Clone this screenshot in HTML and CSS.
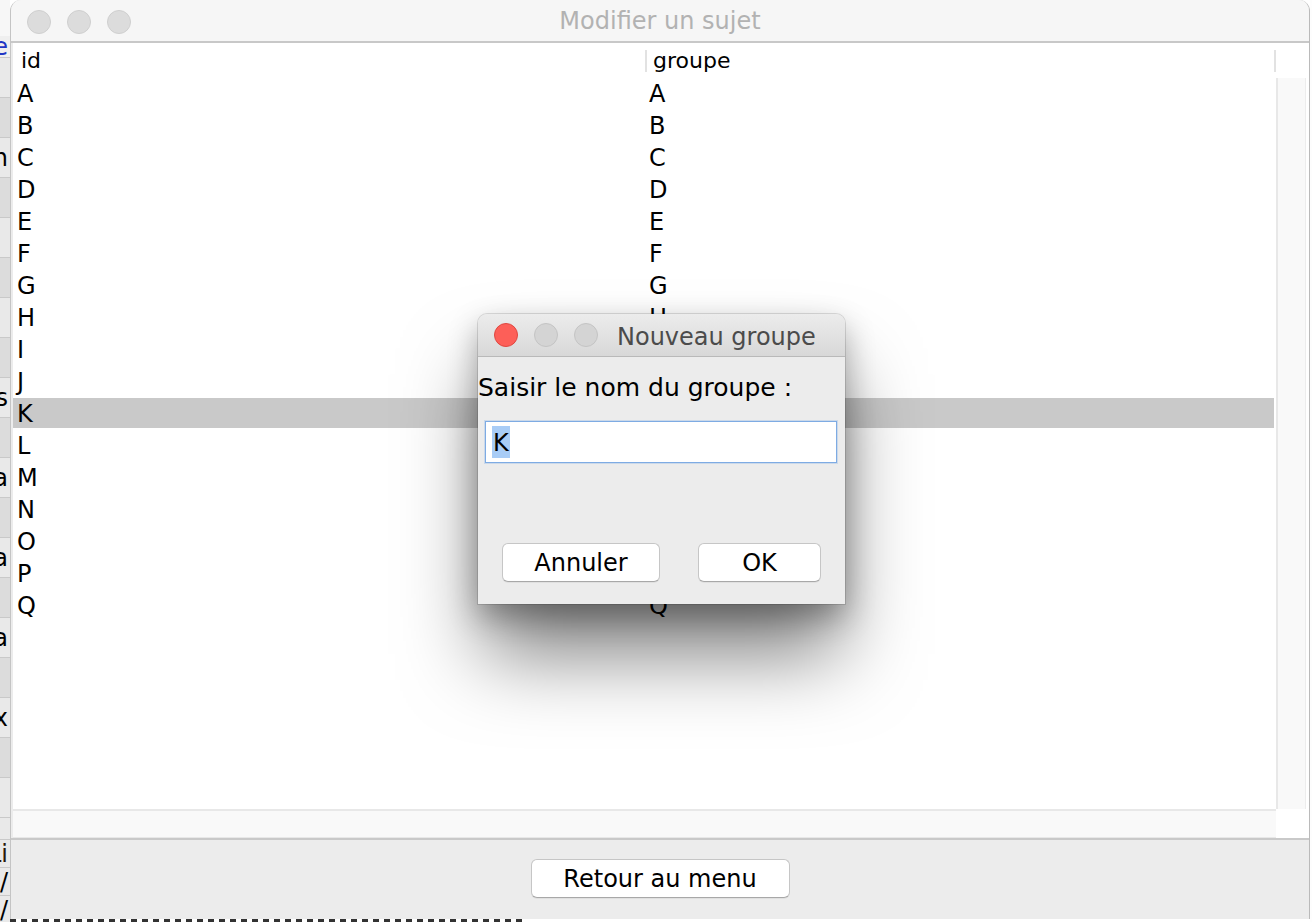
FILE: index.html
```html
<!DOCTYPE html>
<html lang="fr">
<head>
<meta charset="utf-8">
<title>Modifier un sujet</title>
<link rel="stylesheet" href="styles.css">
</head>
<body>
<div class="screen">
  <div class="behind-left">
    <div class="bl-top"></div>
    <div class="bl-row short blue"><span>e</span></div>
    <div class="bl-row"></div>
    <div class="bl-row dark"></div>
    <div class="bl-row"><span>n</span></div>
    <div class="bl-row dark"></div>
    <div class="bl-row"></div>
    <div class="bl-row dark"></div>
    <div class="bl-row"></div>
    <div class="bl-row dark"></div>
    <div class="bl-row"><span>s</span></div>
    <div class="bl-row dark"></div>
    <div class="bl-row"><span>a</span></div>
    <div class="bl-row dark"></div>
    <div class="bl-row"><span>a</span></div>
    <div class="bl-row dark"></div>
    <div class="bl-row"><span>a</span></div>
    <div class="bl-row dark"></div>
    <div class="bl-row"><span>x</span></div>
    <div class="bl-row dark"></div>
    <div class="bl-row"></div>
    <div class="bl-row short"></div>
    <div class="bl-row mid brown"><span>Li</span></div>
    <div class="bl-row mid"><span>/</span></div>
    <div class="bl-row mid"><span>/</span></div>
  </div>

  <div class="wincol">
    <div class="window">
      <div class="titlebar">
        <div class="lights">
          <span class="light"></span>
          <span class="light"></span>
          <span class="light"></span>
        </div>
        <div class="title">Modifier un sujet</div>
        <div></div>
      </div>

      <div class="pane">
        <div class="thead">
          <div class="th c1">id</div>
          <div class="sep"></div>
          <div class="th c2">groupe</div>
          <div class="sep"></div>
        </div>
        <div class="thead-corner"></div>
        <div class="tbody">
          <div class="row"><div class="c1">A</div><div class="c2">A</div></div>
          <div class="row"><div class="c1">B</div><div class="c2">B</div></div>
          <div class="row"><div class="c1">C</div><div class="c2">C</div></div>
          <div class="row"><div class="c1">D</div><div class="c2">D</div></div>
          <div class="row"><div class="c1">E</div><div class="c2">E</div></div>
          <div class="row"><div class="c1">F</div><div class="c2">F</div></div>
          <div class="row"><div class="c1">G</div><div class="c2">G</div></div>
          <div class="row"><div class="c1">H</div><div class="c2">H</div></div>
          <div class="row"><div class="c1">I</div><div class="c2">I</div></div>
          <div class="row"><div class="c1">J</div><div class="c2">J</div></div>
          <div class="row sel"><div class="c1">K</div><div class="c2">K</div></div>
          <div class="row"><div class="c1">L</div><div class="c2">L</div></div>
          <div class="row"><div class="c1">M</div><div class="c2">M</div></div>
          <div class="row"><div class="c1">N</div><div class="c2">N</div></div>
          <div class="row"><div class="c1">O</div><div class="c2">O</div></div>
          <div class="row"><div class="c1">P</div><div class="c2">P</div></div>
          <div class="row"><div class="c1">Q</div><div class="c2">Q</div></div>
        </div>
        <div class="vtrack"></div>
        <div class="htrack"></div>
        <div class="corner"></div>
      </div>

      <div class="bottombar">
        <button class="btn btn-back">Retour au menu</button>
      </div>
    </div>
    <div class="under"></div>
  </div>

  <div class="behind-right"></div>

  <div class="dialog">
    <div class="dtitlebar">
      <div class="lights">
        <span class="light red"></span>
        <span class="light dim"></span>
        <span class="light dim"></span>
      </div>
      <div class="dtitle">Nouveau groupe</div>
    </div>
    <div class="dbody">
      <div class="dlabel">Saisir le nom du groupe :</div>
      <div class="field"><span class="selected">K</span></div>
      <div class="dbuttons">
        <button class="btn btn-cancel">Annuler</button>
        <button class="btn btn-ok">OK</button>
      </div>
    </div>
  </div>
</div>
</body>
</html>
```

FILE: styles.css
```css
* { box-sizing: border-box; }

body {
  margin: 0;
  background: #ffffff;
  font-family: "DejaVu Sans", "Liberation Sans", sans-serif;
  color: #000;
}

.screen {
  position: relative;
  display: flex;
  width: 1312px;
  height: 922px;
  overflow: hidden;
}

/* background window peeking out on the left */
.behind-left {
  width: 10px;
  flex: none;
  display: flex;
  flex-direction: column;
  background: #e6e6e6;
  overflow: hidden;
}
.bl-top { height: 36px; flex: none; background: #f7f7f7; }
.bl-row {
  height: 40px;
  flex: none;
  display: flex;
  justify-content: flex-end;
  align-items: center;
  padding-right: 2px;
  font-size: 24px;
  white-space: nowrap;
  overflow: hidden;
  background: #e9e9e9;
  border-bottom: 1px solid #c9c9c9;
}
.bl-row.dark { background: #dcdcdc; }
.bl-row.short { height: 22px; }
.bl-row.mid { height: 28px; }
.bl-row.blue { color: #1f35c4; background: #efefef; }
.bl-row.brown { color: #2a1a08; }

.wincol {
  width: 1300px;
  flex: none;
  display: flex;
  flex-direction: column;
  background: #ffffff;
}

.window {
  height: 919px;
  flex: none;
  display: flex;
  flex-direction: column;
  background: #ececec;
  border-left: 1px solid #c4c4c4;
  border-right: 1px solid #bababa;
  border-radius: 11px 11px 0 0;
  overflow: hidden;
}

.under {
  height: 3px;
  width: 512px;
  background: repeating-linear-gradient(90deg, #333 0 6px, #fff 6px 11px);
}

.behind-right {
  width: 2px;
  flex: none;
  background: #fdfdfd;
}

/* title bar */
.titlebar {
  height: 43px;
  flex: none;
  display: grid;
  grid-template-columns: 1fr auto 1fr;
  align-items: center;
  background: #f6f6f6;
  border-bottom: 2px solid #c8c8c8;
}
.lights {
  display: flex;
  gap: 16px;
  padding-left: 16px;
}
.light {
  width: 24px;
  height: 24px;
  border-radius: 50%;
  background: #dcdcdc;
  border: 1px solid #cfcfcf;
}
.title {
  font-size: 24px;
  color: #b2b2b2;
  line-height: 43px;
}

/* scroll pane with table */
.pane {
  height: 795px;
  flex: none;
  margin-left: 2px;
  display: grid;
  grid-template-columns: 1263px 1fr;
  grid-template-rows: 35px 1fr 29px;
  background: #ffffff;
}
.thead {
  display: flex;
  align-items: stretch;
  font-size: 22px;
  line-height: 35px;
}
.th.c1 { width: 632px; padding-left: 8px; }
.th.c2 { width: 627px; padding-left: 6px; }
.sep {
  width: 2px;
  margin: 7px 0 6px;
  background: #e2e2e2;
}
.thead-corner { background: #fff; }

.tbody { overflow: hidden; }
.row {
  display: flex;
  height: 30px;
  margin-bottom: 2px;
  font-size: 24px;
  line-height: 33px;
}
.row.sel { background: #c9c9c9; margin-right: 2px; }
.row .c1 { width: 632px; padding-left: 4px; }
.row .c2 { padding-left: 4px; }

.vtrack {
  background: #f9f9f9;
  border-left: 2px solid #e8e8e8;
  border-right: 1px solid #ededed;
  margin-right: 3px;
}
.htrack {
  background: #f9f9f9;
  border-top: 2px solid #e8e8e8;
  border-bottom: 1px solid #e8e8e8;
}
.corner { background: #fff; }

/* bottom bar */
.bottombar {
  flex: 1;
  display: flex;
  justify-content: center;
  align-items: flex-start;
  padding-top: 19px;
  border-top: 2px solid #c9c9c9;
}

.btn {
  height: 39px;
  padding: 0;
  background: #ffffff;
  border: 1px solid #c6c6c6;
  border-bottom-color: #a8a8a8;
  border-radius: 6px;
  font-family: "DejaVu Sans", "Liberation Sans", sans-serif;
  font-size: 24px;
  color: #000;
  line-height: 38px;
  box-shadow: 0 1px 0 rgba(0,0,0,0.05);
}
.btn-back { width: 259px; }
.btn-cancel { width: 158px; }
.btn-ok { width: 123px; }

/* modal dialog (overlay) */
.dialog {
  position: absolute;
  left: 478px;
  top: 314px;
  width: 367px;
  height: 290px;
  background: #ececec;
  border-radius: 9px 9px 0 0;
  box-shadow:
    0 0 0 1px rgba(0,0,0,0.12),
    0 12px 30px rgba(0,0,0,0.30),
    0 55px 80px -5px rgba(0,0,0,0.50);
  display: flex;
  flex-direction: column;
}
.dtitlebar {
  height: 43px;
  flex: none;
  display: flex;
  align-items: center;
  background: linear-gradient(#ececec, #d8d8d8);
  border-bottom: 1px solid #b9b9b9;
  border-radius: 9px 9px 0 0;
}
.light.red { background: #fd5f58; border-color: #df4740; }
.light.dim { background: #d4d4d4; border-color: #c4c4c4; }
.dtitle {
  margin-left: 19px;
  padding-top: 4px;
  font-size: 24px;
  color: #4b4b4b;
  line-height: 38px;
}
.dbody {
  display: flex;
  flex-direction: column;
}
.dlabel {
  margin-top: 14px;
  height: 32px;
  font-size: 25px;
  line-height: 34px;
}
.field {
  margin: 18px 8px 0 7px;
  height: 42px;
  background: #fff;
  border: 1px solid #7eabe3;
  box-shadow: 0 0 0 1px rgba(126,171,227,0.3);
  padding: 4px 0 0 6px;
}
.selected {
  display: inline-block;
  height: 32px;
  padding: 0 1px;
  background: #a8ccf6;
  font-size: 24px;
  line-height: 34px;
}
.dbuttons {
  margin-top: 80px;
  display: flex;
  justify-content: space-between;
  padding: 0 24px;
}
```
